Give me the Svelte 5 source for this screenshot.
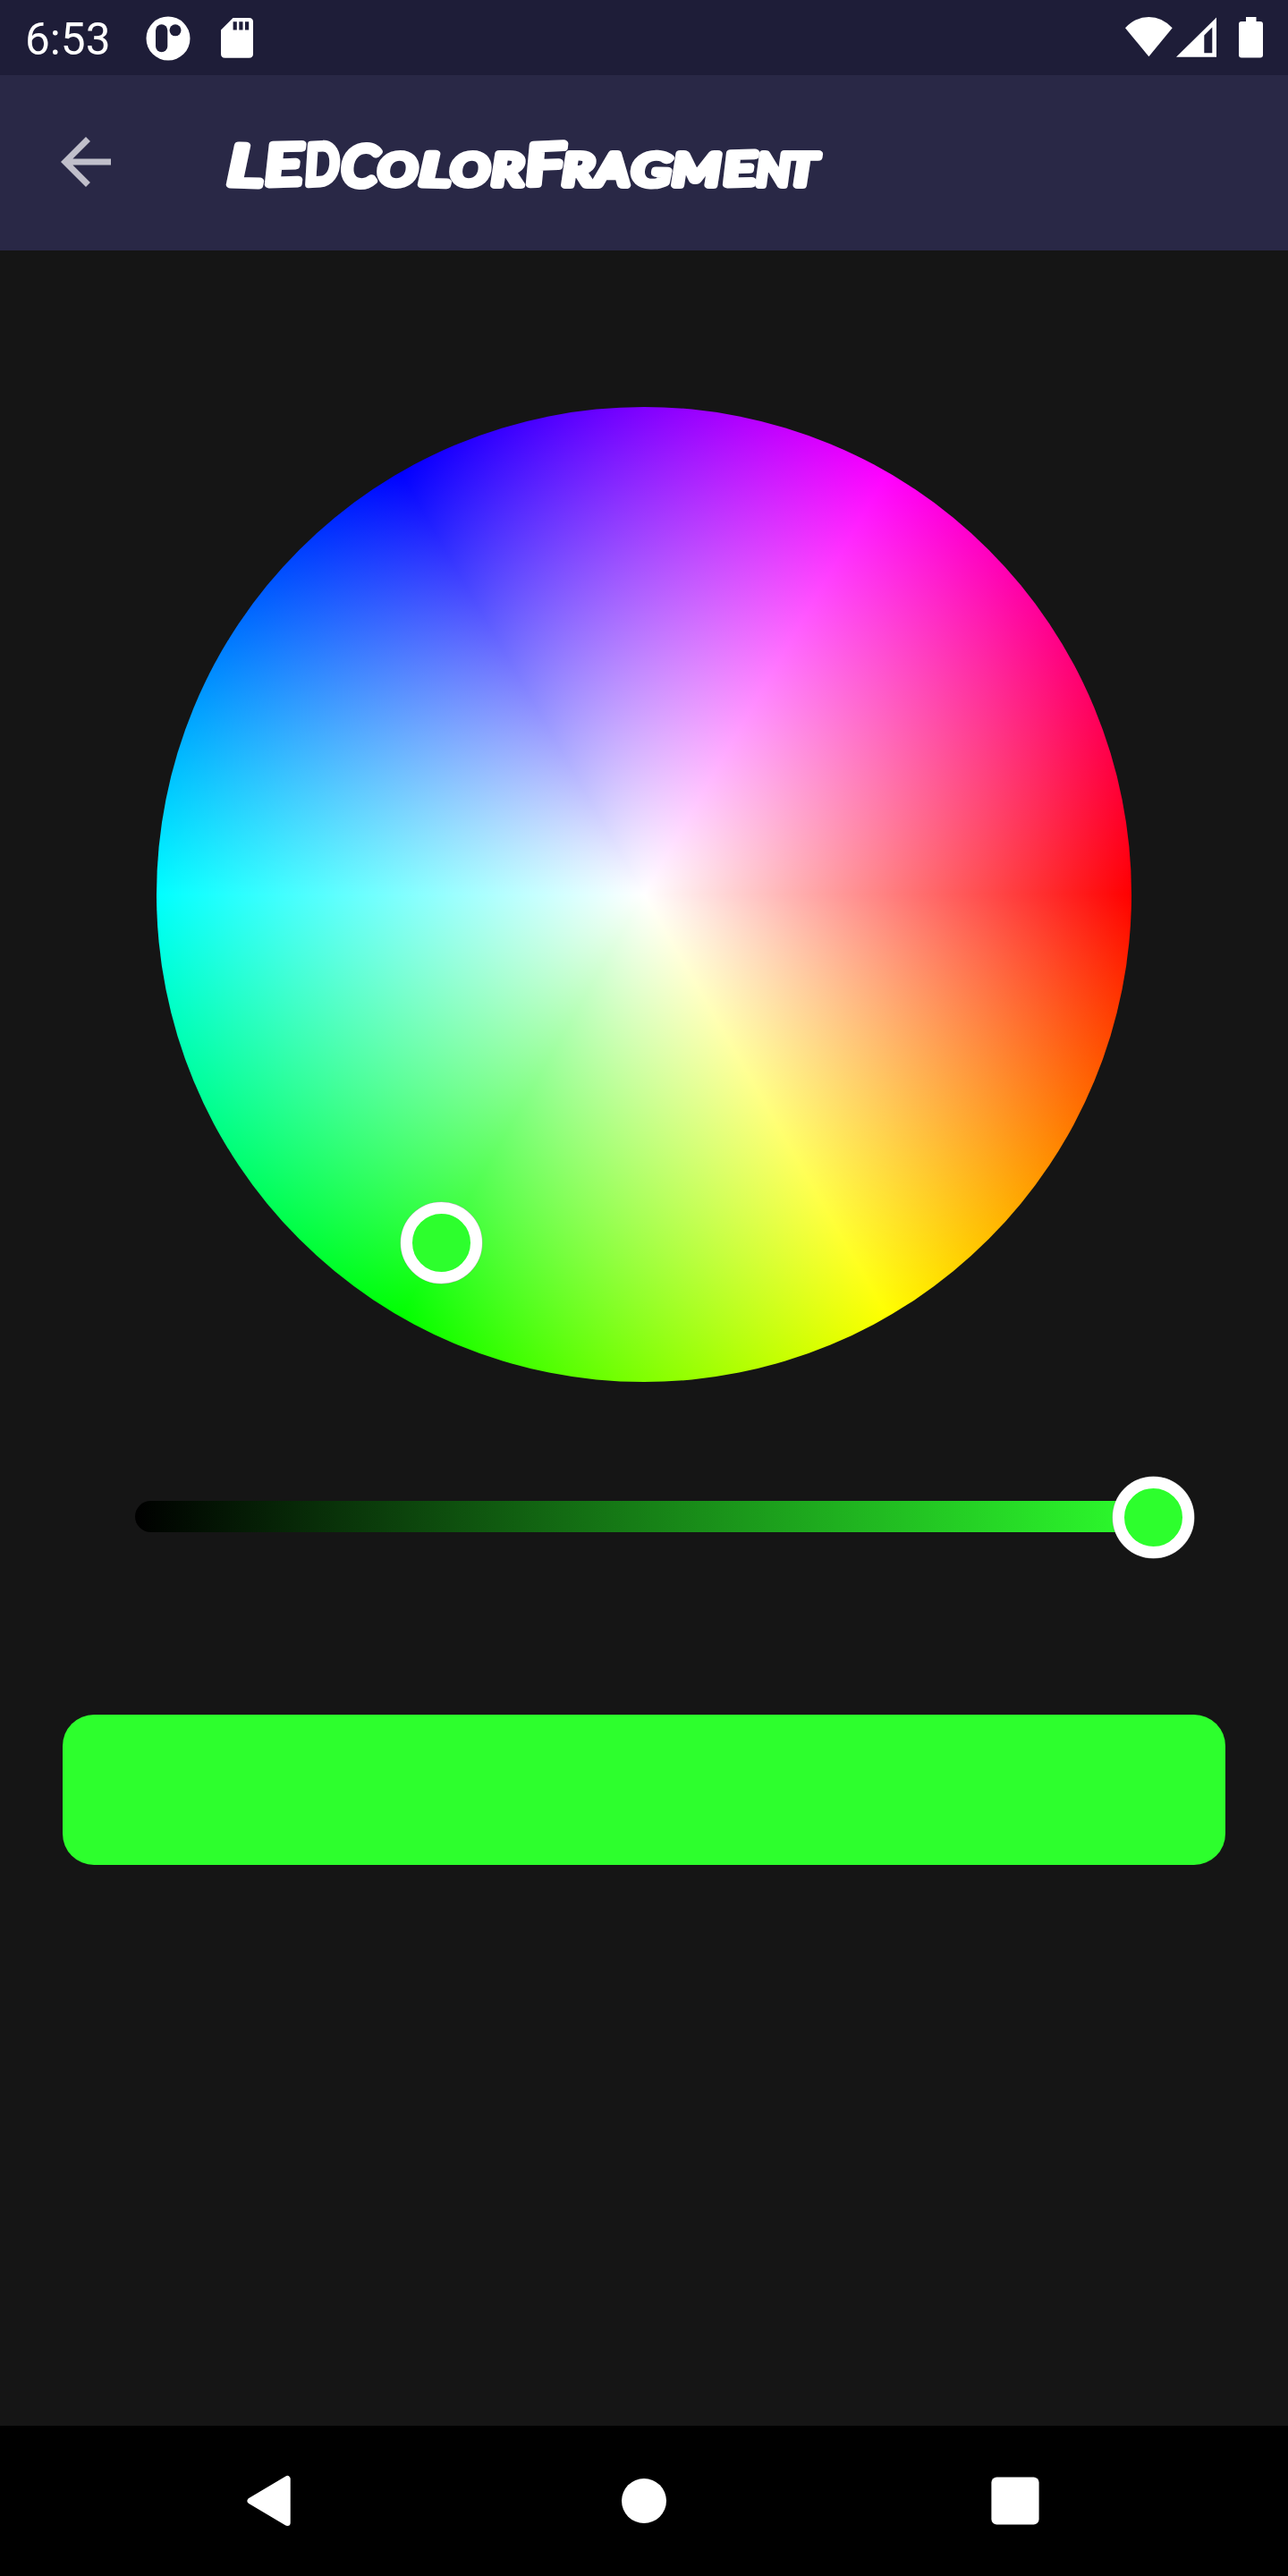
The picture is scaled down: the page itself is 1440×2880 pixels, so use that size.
<script>
  const color = '#2dff2d';

  // Hand-lettered title: capitals and smaller capitals, with pen position and width per letter
  const title = [
    { text: 'L', x: 4, width: 39, tilt: 2 },
    { text: 'E', x: 47, width: 42, tilt: -2 },
    { text: 'D', x: 92, width: 38, tilt: -3 },
    { text: 'C', x: 131, width: 40, tilt: 3 },
    { text: 'o', x: 173, width: 43, tilt: 0, small: true },
    { text: 'l', x: 219, width: 33, tilt: 2, small: true },
    { text: 'o', x: 254, width: 43, tilt: 0, small: true },
    { text: 'r', x: 300, width: 35, tilt: 0, small: true },
    { text: 'F', x: 339, width: 43, tilt: -3, small: false },
    { text: 'r', x: 379, width: 35, tilt: 0, small: true },
    { text: 'a', x: 416, width: 37, tilt: 0, small: true },
    { text: 'g', x: 456, width: 43, tilt: 2, small: true },
    { text: 'm', x: 502, width: 53, tilt: 0, small: true },
    { text: 'e', x: 560, width: 35, tilt: -2, small: true },
    { text: 'n', x: 596, width: 37, tilt: 0, small: true },
    { text: 't', x: 630, width: 33, tilt: 0, small: true }
  ];
</script>

<div class="screen">
  <header class="status">
    <span class="clock">6:53</span>
    <svg class="notice" width="50" height="50" viewBox="0 0 50 50">
      <circle cx="25" cy="25" r="24.5" fill="#fff" />
      <rect x="11" y="9.300" width="13.300" height="31" rx="6.650" fill="#1e1d38" />
      <circle cx="33" cy="15.800" r="6.500" fill="#1e1d38" />
    </svg>
    <svg class="card" width="36" height="45" viewBox="0 0 36 45">
      <path fill="#fff" fill-rule="evenodd" d="M13.500 0H31.500Q36 0 36 4.500V40.300Q36 44.700 31.500 44.700H4.500Q0 44.700 0 40.300V13.500ZM13.600 4.300V13.500H17.800V4.300ZM20.300 4.300V13.500H24.500V4.300ZM27 4.300V13.500H31.200V4.300Z" />
    </svg>
    <svg class="signals" width="154" height="46" viewBox="0 0 154 46">
      <path fill="#fff" d="M0 12.300Q11.500 0 26.400 0T52.700 12.300L26.400 44.300Z" />
      <path fill="#fff" fill-rule="evenodd" d="M102 .5V44.700H57ZM97.300 11.500L88.300 20.500V40.300H97.300Z" />
      <path fill="#fff" d="M135 0H146.500V5H151Q154 5 154 8V42.500Q154 45.500 151 45.500H130Q127 45.500 127 42.500V8Q127 5 130 5H135Z" />
    </svg>
  </header>

  <div class="appbar">
    <svg class="back" width="56" height="56" viewBox="4 4 16 16">
      <path fill="#c0bfca" d="M20 11H7.830l5.590-5.590L12 4l-8 8 8 8 1.410-1.410L7.830 13H20z" />
    </svg>
    <svg class="title" width="690" height="110" viewBox="0 0 690 110">
      <text y="76.500">{#each title as l}<tspan class:small={l.small} x={l.x} rotate={l.tilt} textLength={l.width} lengthAdjust="spacingAndGlyphs">{l.text}</tspan>{/each}</text>
    </svg>
  </div>

  <main>
    <div class="wheel">
      <div class="knob selector"></div>
    </div>
    <div class="slider">
      <div class="track"></div>
      <div class="knob thumb"></div>
    </div>
    <div class="preview" style:background={color}></div>
  </main>

  <nav>
    <svg width="56" height="56" viewBox="0 0 56 56">
      <path d="M44.200 3.500V52.500L3 28Z" fill="#fff" stroke="#fff" stroke-width="7" stroke-linejoin="round" />
    </svg>
    <svg width="56" height="56" viewBox="0 0 56 56"><circle cx="28" cy="28" r="25" fill="#fff" /></svg>
    <svg width="56" height="56" viewBox="0 0 56 56"><rect x="1.400" y="1.400" width="53.200" height="53.200" rx="6" fill="#fff" /></svg>
  </nav>
</div>

<style>
  :global(body) { margin: 0; background: #151515; }
  svg { display: block; flex: none; overflow: visible; }
  .screen {
    width: 1440px;
    height: 2880px;
    display: flex;
    flex-direction: column;
    background: #151515;
    overflow: hidden;
  }
  .status {
    height: 84px;
    flex: none;
    box-sizing: border-box;
    padding: 0 28px;
    display: flex;
    align-items: flex-start;
    background: #1e1d38;
  }
  .clock {
    width: 134.500px;
    padding-top: 15px;
    font: 400 49.500px/58px Roboto, sans-serif;
    color: #fff;
  }
  .notice { margin-top: 17.500px; }
  .card { margin: 20px 0 0 34px; }
  .signals { margin: 19px 0.500px 0 auto; }
  .appbar {
    height: 196px;
    flex: none;
    display: flex;
    align-items: flex-start;
    background: #292846;
  }
  .back { margin: 68.500px 0 0 68px; }
  .title { margin: 46px 0 0 126px; }
  .title text {
    font: italic 400 62px Lato, sans-serif;
    fill: #fff;
    stroke: #fff;
    stroke-width: 8px;
    stroke-linejoin: round;
  }
  .title .small { font-size: 49px; text-transform: uppercase; }
  main {
    flex: 1;
    display: flex;
    flex-direction: column;
    align-items: center;
    padding-top: 175px;
  }
  .wheel {
    position: relative;
    width: 1090px;
    height: 1090px;
    flex: none;
    border-radius: 50%;
    background:
      radial-gradient(circle closest-side, #fff, rgba(255, 255, 255, 0)),
      conic-gradient(from 90deg, #f00, #ff0, #0f0, #0ff, #00f, #f0f, #f00);
  }
  .knob {
    position: absolute;
    box-sizing: border-box;
    width: 91px;
    height: 91px;
    border: 13px solid #fff;
    border-radius: 50%;
    background: #2dff2d;
    box-shadow: 0 0 0 0.500px #aaa;
  }
  .selector { left: 272.500px; top: 888.500px; }
  .slider {
    position: relative;
    width: 1138px;
    height: 35px;
    flex: none;
    margin-top: 133px;
  }
  .track {
    height: 100%;
    border-radius: 17.500px;
    background: linear-gradient(90deg, #000, #2dff2d);
  }
  .thumb { right: -45.500px; top: -27.500px; }
  .preview {
    width: 1300px;
    height: 168px;
    flex: none;
    margin-top: 204px;
    border-radius: 35px;
  }
  nav {
    height: 168px;
    flex: none;
    display: flex;
    align-items: center;
    justify-content: center;
    gap: 359px;
    background: #000;
  }
</style>
